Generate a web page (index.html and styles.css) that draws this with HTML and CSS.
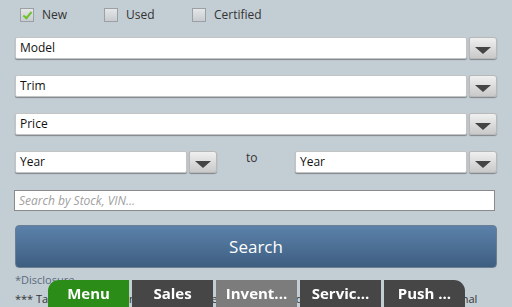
FILE: index.html
```html
<!DOCTYPE html>
<html lang="en">
<head>
    <meta charset="UTF-8">
    <meta name="viewport" content="width=device-width, initial-scale=1.0">
    <title>Inventory Search</title>
    <link rel="stylesheet" href="styles.css">
</head>
<body>
    <div class="page">
        <div class="checks">
            <label class="check"><span class="box checked"></span>New</label>
            <label class="check"><span class="box"></span>Used</label>
            <label class="check"><span class="box"></span>Certified</label>
        </div>

        <div class="select row-model">
            <div class="field">Model</div>
            <div class="arrow"><span class="tri"></span></div>
        </div>
        <div class="select row-gap">
            <div class="field">Trim</div>
            <div class="arrow"><span class="tri"></span></div>
        </div>
        <div class="select row-gap">
            <div class="field">Price</div>
            <div class="arrow"><span class="tri"></span></div>
        </div>

        <div class="year-row">
            <div class="select year">
                <div class="field">Year</div>
                <div class="arrow"><span class="tri"></span></div>
            </div>
            <div class="to">to</div>
            <div class="select year">
                <div class="field">Year</div>
                <div class="arrow"><span class="tri"></span></div>
            </div>
        </div>

        <div class="search-input">Search by Stock, VIN...</div>

        <button type="button" class="search-btn">Search</button>

        <p class="disclosure">*Disclosure</p>
        <p class="fine">*** Tax, title, license and registration fees are not included in the prices and are additional</p>
    </div>

    <!-- bottom tab bar sits over the page -->
    <div class="tabs">
        <div class="tab menu">Menu</div>
        <div class="tab">Sales</div>
        <div class="tab current">Invent...</div>
        <div class="tab">Servic...</div>
        <div class="tab last">Push ...</div>
    </div>
</body>
</html>
```

FILE: styles.css
```css
body {
    margin: 0;
    background: #c3cdd4;
    font-family: "Open Sans", "DejaVu Sans", sans-serif;
    font-size: 12px;
    color: #222;
    overflow: hidden;
}
.page {
    padding: 6px 15px 0 15px;
}
.checks {
    display: grid;
    grid-template-columns: 84px 88px auto;
    height: 16px;
    padding-left: 5px;
}
.check {
    display: flex;
    align-items: center;
    gap: 8px;
    color: #333;
}
.box {
    width: 12px;
    height: 12px;
    border: 1px solid #9aa0a4;
    background: linear-gradient(#e4e6e8, #c8ccd0);
    position: relative;
}
.box.checked::after {
    content: "";
    position: absolute;
    left: 4px;
    top: 1px;
    width: 3px;
    height: 7px;
    border: solid #6cc22c;
    border-width: 0 2px 2px 0;
    transform: rotate(40deg);
}
.select {
    display: flex;
    height: 22px;
}
.row-model {
    margin-top: 15px;
}
.row-gap {
    margin-top: 16px;
}
.field {
    flex: 1;
    background: #fff;
    border: 1px solid #c4c4c4;
    border-radius: 2px;
    box-shadow: 0 1px 1px rgba(0, 0, 0, 0.35);
    padding-left: 4px;
    line-height: 20px;
    color: #111;
}
.arrow {
    width: 26px;
    margin-left: 2px;
    border: 1px solid #b8b8b8;
    border-radius: 2px 3px 3px 2px;
    background: linear-gradient(#f0f0f0, #c9c9c9);
    box-shadow: 0 1px 1px rgba(0, 0, 0, 0.35);
    display: flex;
    justify-content: center;
    align-items: center;
}
.tri {
    width: 0;
    height: 0;
    margin-top: 5px;
    border-left: 8px solid transparent;
    border-right: 8px solid transparent;
    border-top: 7px solid #444;
}
.year-row {
    display: flex;
    margin-top: 16px;
}
.year {
    width: 202px;
}
.to {
    flex: 1;
    padding-left: 29px;
    line-height: 12px;
    padding-top: 1px;
    color: #333;
}
.search-input {
    margin-top: 17px;
    margin-left: -1px;
    margin-right: 2px;
    height: 19px;
    background: #fff;
    border: 1px solid #8a8a8a;
    padding-left: 4px;
    line-height: 19px;
    font-style: italic;
    color: #a0a0a0;
}
.search-btn {
    display: block;
    width: 100%;
    height: 43px;
    margin-top: 14px;
    border: 1px solid #6a7f94;
    border-radius: 4px;
    background: linear-gradient(#5b81aa, #3e5e80);
    color: #fff;
    font-family: "Open Sans", "DejaVu Sans", sans-serif;
    font-size: 17px;
}
.disclosure {
    margin: 5px 0 0 0;
    font-size: 11px;
    line-height: 14px;
    color: #5a6b7c;
}
.fine {
    margin: 5px 0 0 0;
    font-size: 11px;
    line-height: 14px;
    color: #333;
    white-space: nowrap;
}
.tabs {
    position: fixed;
    left: 48px;
    bottom: 0;
    display: flex;
    gap: 3px;
}
.tab {
    width: 81px;
    height: 27px;
    line-height: 27px;
    text-align: center;
    background: #464646;
    color: #fff;
    font-weight: bold;
    font-size: 15px;
}
.tab.menu {
    background: #2b8c17;
    border-top-left-radius: 11px;
}
.tab.current {
    background: #7c7c7c;
}
.tab.last {
    border-top-right-radius: 11px;
}
```
